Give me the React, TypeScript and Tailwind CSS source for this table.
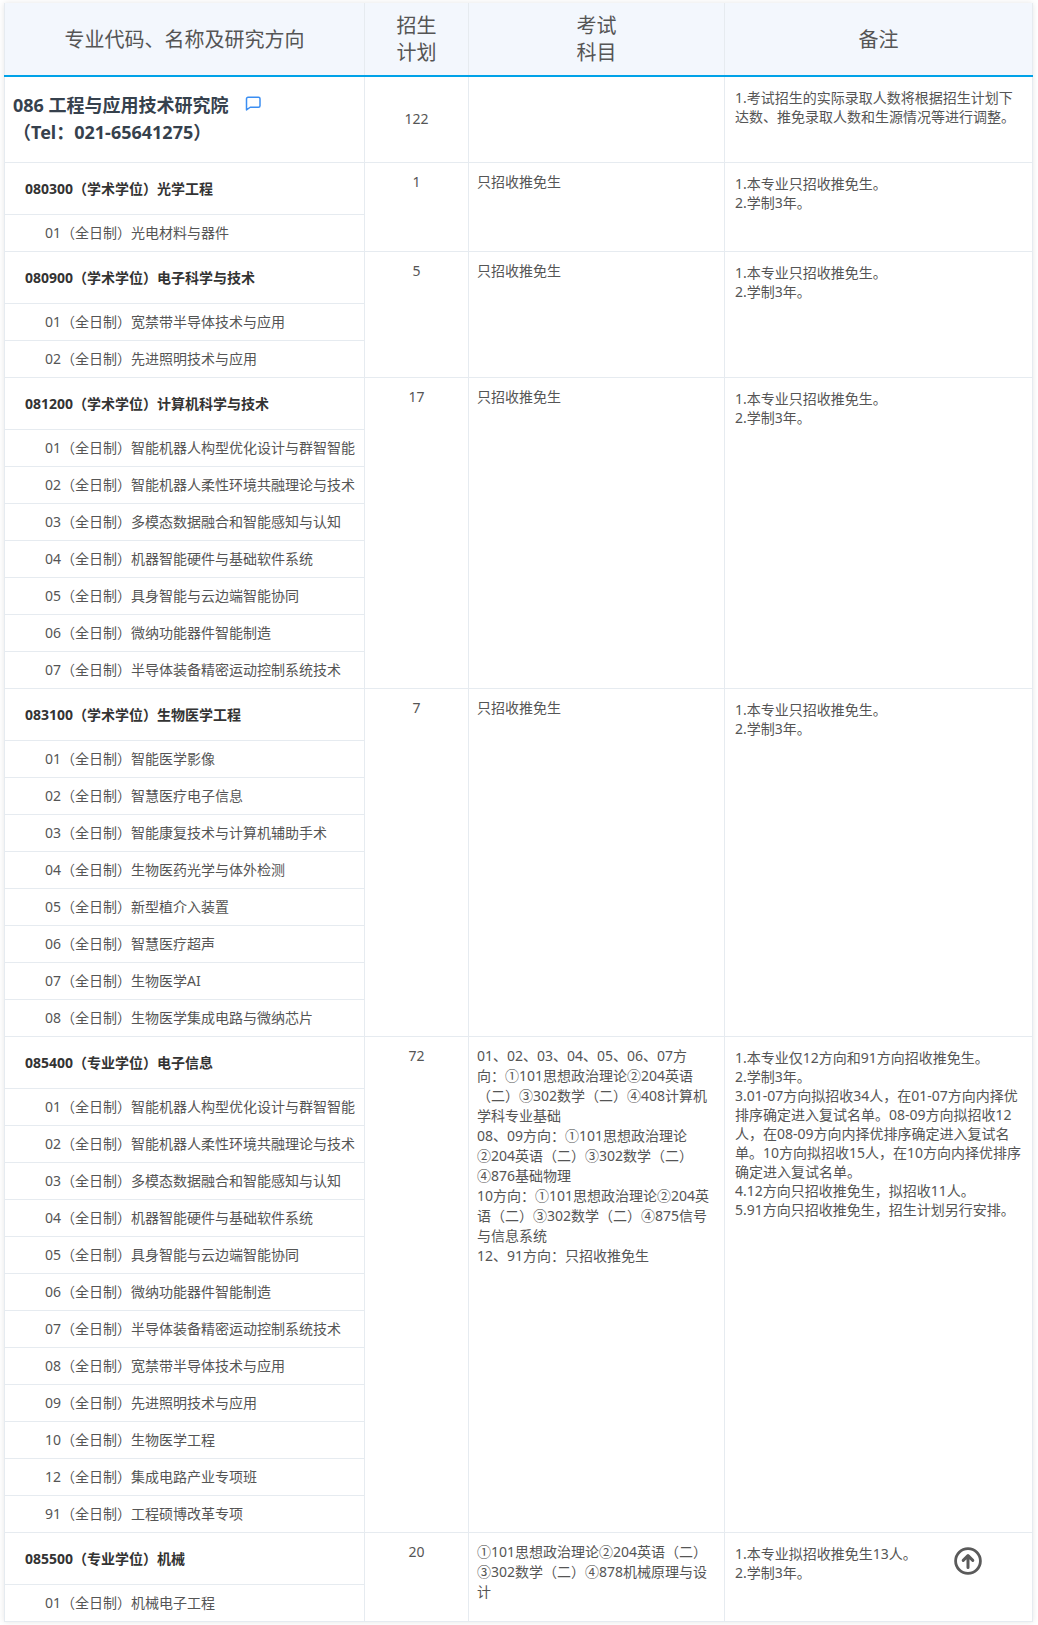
import React from "react";

type Major = {
  title: string;
  plan: string;
  exam: string[];
  notes: string[];
  subs: string[];
};

const aiDirs = [
  "01（全日制）智能机器人构型优化设计与群智智能",
  "02（全日制）智能机器人柔性环境共融理论与技术",
  "03（全日制）多模态数据融合和智能感知与认知",
  "04（全日制）机器智能硬件与基础软件系统",
  "05（全日制）具身智能与云边端智能协同",
  "06（全日制）微纳功能器件智能制造",
  "07（全日制）半导体装备精密运动控制系统技术",
];

const stdNotes = ["1.本专业只招收推免生。", "2.学制3年。"];

const majors: Major[] = [
  {
    title: "080300（学术学位）光学工程",
    plan: "1",
    exam: ["只招收推免生"],
    notes: stdNotes,
    subs: ["01（全日制）光电材料与器件"],
  },
  {
    title: "080900（学术学位）电子科学与技术",
    plan: "5",
    exam: ["只招收推免生"],
    notes: stdNotes,
    subs: ["01（全日制）宽禁带半导体技术与应用", "02（全日制）先进照明技术与应用"],
  },
  {
    title: "081200（学术学位）计算机科学与技术",
    plan: "17",
    exam: ["只招收推免生"],
    notes: stdNotes,
    subs: aiDirs,
  },
  {
    title: "083100（学术学位）生物医学工程",
    plan: "7",
    exam: ["只招收推免生"],
    notes: stdNotes,
    subs: [
      "01（全日制）智能医学影像",
      "02（全日制）智慧医疗电子信息",
      "03（全日制）智能康复技术与计算机辅助手术",
      "04（全日制）生物医药光学与体外检测",
      "05（全日制）新型植介入装置",
      "06（全日制）智慧医疗超声",
      "07（全日制）生物医学AI",
      "08（全日制）生物医学集成电路与微纳芯片",
    ],
  },
  {
    title: "085400（专业学位）电子信息",
    plan: "72",
    exam: [
      "01、02、03、04、05、06、07方",
      "向：①101思想政治理论②204英语",
      "（二）③302数学（二）④408计算机",
      "学科专业基础",
      "08、09方向：①101思想政治理论",
      "②204英语（二）③302数学（二）",
      "④876基础物理",
      "10方向：①101思想政治理论②204英",
      "语（二）③302数学（二）④875信号",
      "与信息系统",
      "12、91方向：只招收推免生",
    ],
    notes: [
      "1.本专业仅12方向和91方向招收推免生。",
      "2.学制3年。",
      "3.01-07方向拟招收34人，在01-07方向内择优",
      "排序确定进入复试名单。08-09方向拟招收12",
      "人，在08-09方向内择优排序确定进入复试名",
      "单。10方向拟招收15人，在10方向内择优排序",
      "确定进入复试名单。",
      "4.12方向只招收推免生，拟招收11人。",
      "5.91方向只招收推免生，招生计划另行安排。",
    ],
    subs: [
      ...aiDirs,
      "08（全日制）宽禁带半导体技术与应用",
      "09（全日制）先进照明技术与应用",
      "10（全日制）生物医学工程",
      "12（全日制）集成电路产业专项班",
      "91（全日制）工程硕博改革专项",
    ],
  },
  {
    title: "085500（专业学位）机械",
    plan: "20",
    exam: [
      "①101思想政治理论②204英语（二）",
      "③302数学（二）④878机械原理与设",
      "计",
    ],
    notes: ["1.本专业拟招收推免生13人。", "2.学制3年。"],
    subs: ["01（全日制）机械电子工程"],
  },
];

function ChatIcon() {
  return (
    <svg width="16" height="15" viewBox="0 0 16 15" fill="none" className="shrink-0">
      <path
        d="M3 1.25h10.5a1.5 1.5 0 0 1 1.5 1.5v7a1.5 1.5 0 0 1-1.5 1.5H5.2L1.5 13.9V2.75A1.5 1.5 0 0 1 3 1.25z"
        stroke="#3b8ef2"
        strokeWidth="1.5"
        strokeLinejoin="round"
      />
    </svg>
  );
}

function ScrollTop() {
  return (
    <div className="fixed right-[56px] bottom-[50px] w-[28px] h-[28px]">
      <svg width="28" height="28" viewBox="0 0 28 28" fill="none">
        <circle cx="14" cy="14" r="12.4" stroke="#5a5a5a" strokeWidth="2.8" />
        <path
          d="M14 20.5V8.8M9.2 13.4L14 8.6l4.8 4.8"
          stroke="#5a5a5a"
          strokeWidth="3"
          strokeLinecap="round"
          strokeLinejoin="round"
        />
      </svg>
    </div>
  );
}

export default function App() {
  const bd = "border border-[#e6ebf0]";
  return (
    <div className="bg-white min-h-[1625px] pt-[3px] pl-[4px] font-['Noto_Sans','Noto_Sans_CJK_SC',sans-serif] text-[14px] text-[#555]">
      <table className="table-fixed border-collapse w-[1028px] shadow-[0_0_6px_rgba(0,0,0,0.10)] bg-white">
        <colgroup>
          <col className="w-[360px]" />
          <col className="w-[104px]" />
          <col className="w-[256px]" />
          <col className="w-[308px]" />
        </colgroup>
        <thead>
          <tr className="h-[73px]">
            {[
              <>专业代码、名称及研究方向</>,
              <>
                招生
                <br />
                计划
              </>,
              <>
                考试
                <br />
                科目
              </>,
              <>备注</>,
            ].map((c, i) => (
              <th
                key={i}
                className="border-x border-x-[#e6ebf0] border-b-2 border-b-[#00a2e8] bg-[#f3f7fd] text-center align-middle text-[20px] leading-[27px] font-normal text-[#555] p-0"
              >
                {c}
              </th>
            ))}
          </tr>
        </thead>
        <tbody>
          <tr className="h-[86px]">
            <td className={`${bd} align-middle pl-[8px] pr-2`}>
              <div className="flex items-center text-[18px] leading-[27px] font-bold text-[#36414d]">
                <span>086 工程与应用技术研究院</span>
                <span className="ml-[16px] -mt-[5px]">
                  <ChatIcon />
                </span>
              </div>
              <div className="text-[18px] leading-[27px] font-bold text-[#36414d]">（Tel：021-65641275）</div>
            </td>
            <td className={`${bd} align-middle text-center leading-[20px]`}>122</td>
            <td className={bd}></td>
            <td className={`${bd} align-top pt-[11px] pl-[10px] pr-2 leading-[19px] whitespace-nowrap`}>
              <div>1.考试招生的实际录取人数将根据招生计划下</div>
              <div>达数、推免录取人数和生源情况等进行调整。</div>
            </td>
          </tr>
          {majors.map((m) => {
            const span = m.subs.length + 1;
            return (
              <React.Fragment key={m.title}>
                <tr className="h-[52px]">
                  <td className={`${bd} align-middle pl-[20px] font-bold text-[#333] whitespace-nowrap`}>{m.title}</td>
                  <td rowSpan={span} className={`${bd} align-top pt-[9px] text-center leading-[20px]`}>
                    {m.plan}
                  </td>
                  <td rowSpan={span} className={`${bd} align-top pt-[9px] px-2 leading-[20px] whitespace-nowrap`}>
                    {m.exam.map((l) => (
                      <div key={l}>{l}</div>
                    ))}
                  </td>
                  <td rowSpan={span} className={`${bd} align-top pt-[11px] pl-[10px] pr-2 leading-[19px] whitespace-nowrap`}>
                    {m.notes.map((l) => (
                      <div key={l}>{l}</div>
                    ))}
                  </td>
                </tr>
                {m.subs.map((s) => (
                  <tr key={s} className="h-[37px]">
                    <td className={`${bd} align-middle pl-[40px] whitespace-nowrap`}>{s}</td>
                  </tr>
                ))}
              </React.Fragment>
            );
          })}
        </tbody>
      </table>
      <ScrollTop />
    </div>
  );
}
